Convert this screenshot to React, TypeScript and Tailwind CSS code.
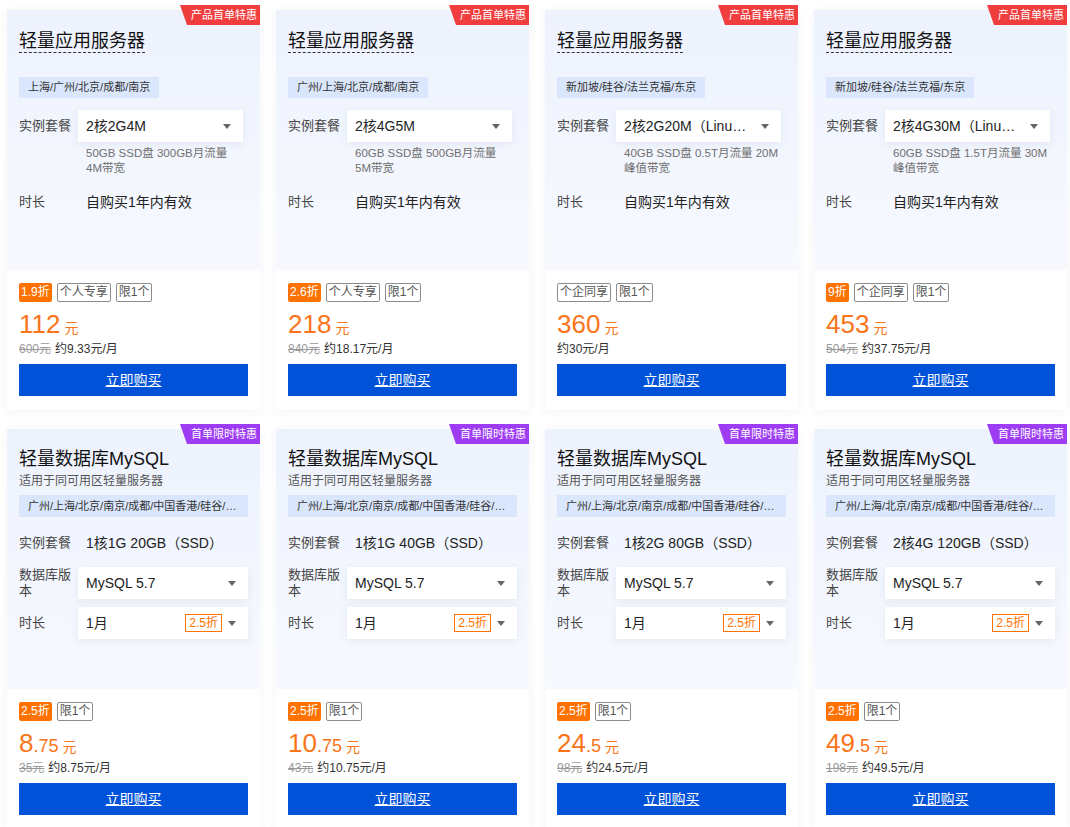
import React from 'react'

type Tag = { text: string; discount?: boolean }

type ServerCard = {
  region: string
  plan: string
  desc: string[]
  tags: Tag[]
  price: string
  old?: string
  monthly: string
}

type DbCard = {
  spec: string
  tags: Tag[]
  int: string
  dec: string
  old: string
  monthly: string
}

const servers: ServerCard[] = [
  {
    region: '上海/广州/北京/成都/南京',
    plan: '2核2G4M',
    desc: ['50GB SSD盘 300GB月流量', '4M带宽'],
    tags: [{ text: '1.9折', discount: true }, { text: '个人专享' }, { text: '限1个' }],
    price: '112',
    old: '600元',
    monthly: '约9.33元/月',
  },
  {
    region: '广州/上海/北京/成都/南京',
    plan: '2核4G5M',
    desc: ['60GB SSD盘 500GB月流量', '5M带宽'],
    tags: [{ text: '2.6折', discount: true }, { text: '个人专享' }, { text: '限1个' }],
    price: '218',
    old: '840元',
    monthly: '约18.17元/月',
  },
  {
    region: '新加坡/硅谷/法兰克福/东京',
    plan: '2核2G20M（Linux）',
    desc: ['40GB SSD盘 0.5T月流量 20M', '峰值带宽'],
    tags: [{ text: '个企同享' }, { text: '限1个' }],
    price: '360',
    monthly: '约30元/月',
  },
  {
    region: '新加坡/硅谷/法兰克福/东京',
    plan: '2核4G30M（Linux）',
    desc: ['60GB SSD盘 1.5T月流量 30M', '峰值带宽'],
    tags: [{ text: '9折', discount: true }, { text: '个企同享' }, { text: '限1个' }],
    price: '453',
    old: '504元',
    monthly: '约37.75元/月',
  },
]

const dbs: DbCard[] = [
  { spec: '1核1G 20GB（SSD）', tags: [{ text: '2.5折', discount: true }, { text: '限1个' }], int: '8', dec: '.75', old: '35元', monthly: '约8.75元/月' },
  { spec: '1核1G 40GB（SSD）', tags: [{ text: '2.5折', discount: true }, { text: '限1个' }], int: '10', dec: '.75', old: '43元', monthly: '约10.75元/月' },
  { spec: '1核2G 80GB（SSD）', tags: [{ text: '2.5折', discount: true }, { text: '限1个' }], int: '24', dec: '.5', old: '98元', monthly: '约24.5元/月' },
  { spec: '2核4G 120GB（SSD）', tags: [{ text: '2.5折', discount: true }, { text: '限1个' }], int: '49', dec: '.5', old: '198元', monthly: '约49.5元/月' },
]

function Caret() {
  return (
    <svg width="8" height="5" viewBox="0 0 8 5" className="shrink-0">
      <path d="M0 0h8L4 5z" fill="#666" />
    </svg>
  )
}

function Badge({ text, purple }: { text: string; purple?: boolean }) {
  return (
    <div
      className={`absolute -top-[5px] right-0 h-5 pl-[11px] pr-[3px] text-[11px] leading-5 text-white [clip-path:polygon(0_0,100%_0,100%_100%,7px_100%)] ${
        purple ? 'bg-[#9d3cf3]' : 'bg-[#f03e3e]'
      }`}
    >
      {text}
    </div>
  )
}

function Tags({ tags }: { tags: Tag[] }) {
  return (
    <div className="flex gap-[5px]">
      {tags.map(t =>
        t.discount ? (
          <span key={t.text} className="h-[19px] rounded-[2px] bg-[#ff7200] px-[2px] text-[12px] leading-[19px] text-white">
            {t.text}
          </span>
        ) : (
          <span key={t.text} className="h-[19px] rounded-[2px] border border-[#8c8c8c] px-[2px] text-[12px] leading-[17px] text-[#555]">
            {t.text}
          </span>
        )
      )}
    </div>
  )
}

function Bottom({ tags, price, old, monthly }: { tags: Tag[]; price: React.ReactNode; old?: string; monthly: string }) {
  return (
    <div className="px-3 pt-[13px]">
      <Tags tags={tags} />
      <div className="mt-[6px] h-8 leading-8 text-[#fa7419]">
        {price}
        <span className="ml-1 text-[14px]">元</span>
      </div>
      <div className="mt-px text-[12px] leading-4 text-[#333]">
        {old && <span className="mr-1 text-[#999] line-through">{old}</span>}
        {monthly}
      </div>
      <button className="mt-[7px] h-8 w-full bg-[#0052d9] text-[14px] text-white underline">立即购买</button>
    </div>
  )
}

function Select({ value, extra, className }: { value: string; extra?: string; className: string }) {
  return (
    <div className={`flex h-8 items-center bg-white pl-2 pr-3 shadow-[0_2px_8px_rgba(40,60,110,0.08)] ${className}`}>
      <span className="mr-2 min-w-0 flex-1 truncate text-[14px] text-[#222]">{value}</span>
      {extra && (
        <span className="mr-[6px] h-[18px] border border-[#ff7200] px-[3px] text-[12px] leading-4 text-[#ff7200]">{extra}</span>
      )}
      <Caret />
    </div>
  )
}

function Server({ c }: { c: ServerCard }) {
  return (
    <div className="relative flex h-[400px] flex-col bg-white shadow-[0_2px_10px_rgba(30,50,90,0.06)]">
      <Badge text="产品首单特惠" />
      <div className="h-[260px] bg-linear-to-b from-[#edf2fd] to-[#f7f9fe] px-3 pt-[20px]">
        <div className="inline-block border-b border-dashed border-[#333] text-[18px] leading-[22px] text-[#111]">轻量应用服务器</div>
        <div className="mt-[20px]">
          <span className="inline-block h-[21px] bg-[#dae6fc] px-[9px] text-[11px] leading-[21px] text-[#333]">{c.region}</span>
        </div>
        <div className="mt-3 flex h-8 items-center">
          <span className="w-[59px] shrink-0 text-[13px] leading-4 text-[#444]">实例套餐</span>
          <Select value={c.plan} className="w-[165px]" />
        </div>
        <div className="ml-[67px] mt-1 text-[11.5px] leading-[15px] text-[#707070]">
          {c.desc.map(d => (
            <div key={d} className="whitespace-nowrap">{d}</div>
          ))}
        </div>
        <div className="mt-[10px] flex h-8 items-center">
          <span className="w-[59px] shrink-0 text-[13px] leading-4 text-[#444]">时长</span>
          <span className="pl-2 text-[14px] text-[#222]">自购买1年内有效</span>
        </div>
      </div>
      <Bottom tags={c.tags} price={<span className="text-[26px]">{c.price}</span>} old={c.old} monthly={c.monthly} />
    </div>
  )
}

function Db({ c }: { c: DbCard }) {
  return (
    <div className="relative flex h-[400px] flex-col bg-white shadow-[0_2px_10px_rgba(30,50,90,0.06)]">
      <Badge text="首单限时特惠" purple />
      <div className="h-[260px] bg-linear-to-b from-[#edf2fd] to-[#f7f9fe] px-3 pt-[19px]">
        <div className="text-[18px] leading-[22px] text-[#111]">轻量数据库MySQL</div>
        <div className="mt-[3px] text-[12px] leading-4 text-[#555]">适用于同可用区轻量服务器</div>
        <div className="mt-[6px] h-[22px] truncate bg-[#dae6fc] px-[9px] text-[11px] leading-[22px] text-[#333]">
          广州/上海/北京/南京/成都/中国香港/硅谷/新加坡/法兰克福/东京
        </div>
        <div className="mt-[10px] flex flex-col gap-2">
          <div className="flex h-8 items-center">
            <span className="w-[59px] shrink-0 text-[13px] leading-4 text-[#444]">实例套餐</span>
            <span className="pl-2 text-[14px] text-[#222]">{c.spec}</span>
          </div>
          <div className="flex h-8 items-center">
            <span className="w-[59px] shrink-0 text-[13px] leading-4 text-[#444]">数据库版本</span>
            <Select value="MySQL 5.7" className="flex-1" />
          </div>
          <div className="flex h-8 items-center">
            <span className="w-[59px] shrink-0 text-[13px] leading-4 text-[#444]">时长</span>
            <Select value="1月" extra="2.5折" className="flex-1" />
          </div>
        </div>
      </div>
      <Bottom
        tags={c.tags}
        price={
          <>
            <span className="text-[26px]">{c.int}</span>
            <span className="text-[18px]">{c.dec}</span>
          </>
        }
        old={c.old}
        monthly={c.monthly}
      />
    </div>
  )
}

export default function App() {
  return (
    <main className="h-[827px] overflow-hidden bg-white pl-[7px] pt-[10px] font-['Liberation_Sans','Noto_Sans_CJK_SC',sans-serif]">
      <div className="grid grid-cols-[repeat(4,253px)] gap-x-4 gap-y-[19px]">
        {servers.map((c, i) => (
          <Server key={i} c={c} />
        ))}
        {dbs.map((c, i) => (
          <Db key={i} c={c} />
        ))}
      </div>
    </main>
  )
}
